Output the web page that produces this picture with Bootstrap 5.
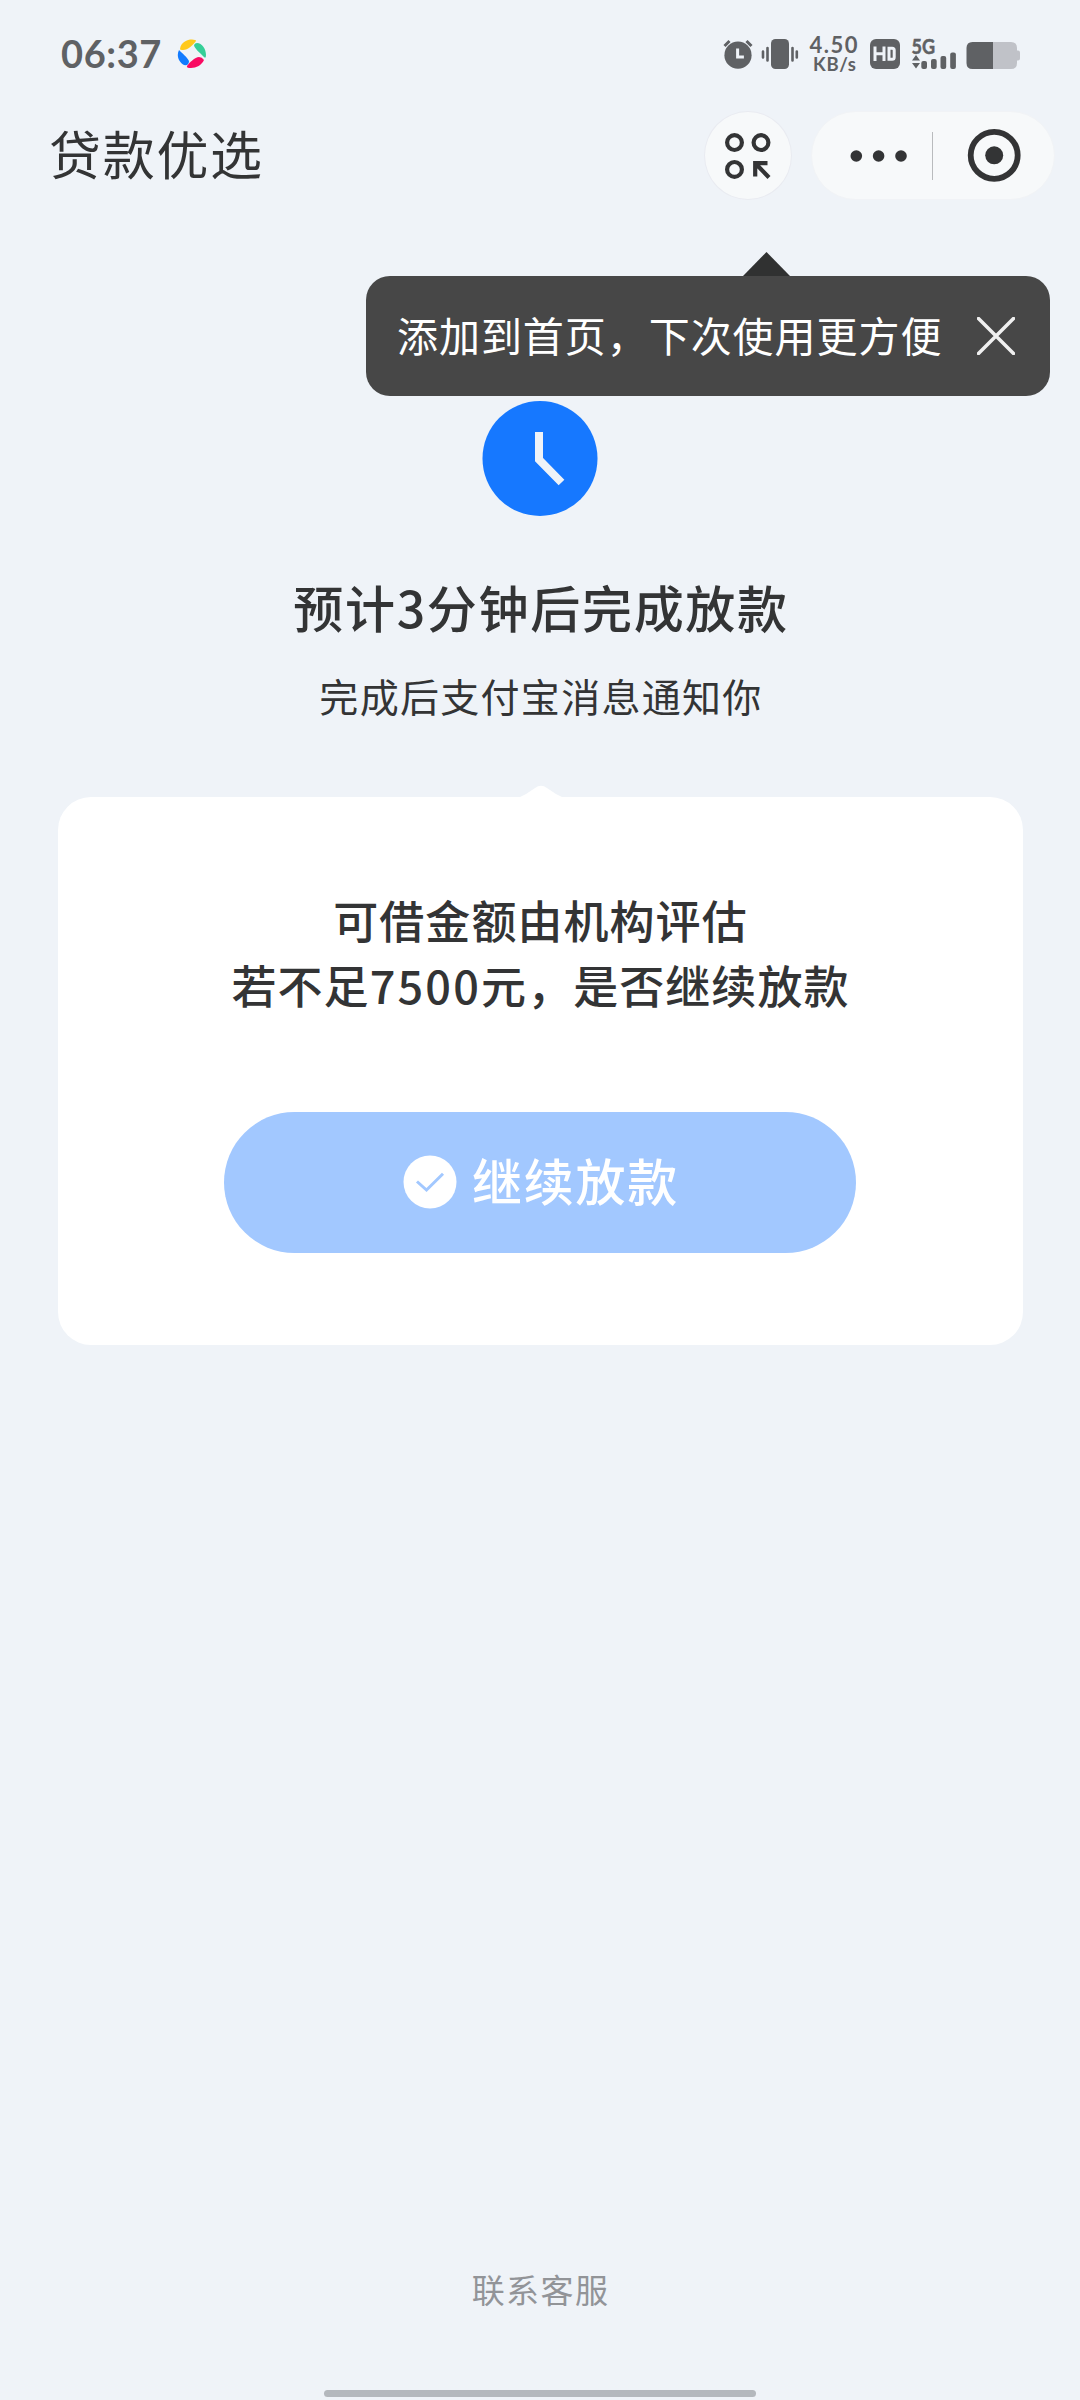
<!DOCTYPE html>
<html lang="zh-CN">
<head>
<meta charset="utf-8">
<meta name="viewport" content="width=device-width, initial-scale=1">
<title>贷款优选</title>
<link href="https://cdn.jsdelivr.net/npm/bootstrap@5.3.0/dist/css/bootstrap.min.css" rel="stylesheet">
<style>
body{background:#eff3f8;color:#333435;font-family:"Noto Sans CJK SC",sans-serif}
.screen{width:1080px;height:2400px;overflow:hidden}
.status{height:111px;padding:0 60px}
.status svg{display:block}
.clock-text{font:700 38px/56px Lato,sans-serif;color:#5f6164;letter-spacing:.6px;width:117px;padding:25px 0 0 1px}
.topbar{height:89px;padding:0 25px 0 49px}
.page-title{font-size:52px;line-height:84px;letter-spacing:1.7px;height:89px}
.round-btn{width:88px;height:89px;background:#f7f9fa;border:1px solid #e9ebf1;margin-right:19px}
.capsule{width:244px;height:89px;background:#f7f9fa;border:1px solid #f1f3f6}
.tip{left:366px;top:276px;width:684px;height:120px;background:#474747;border-radius:24px;padding:0 35px 0 31px;color:#fff;font-size:41px;letter-spacing:.95px}
.tip span{line-height:60px;padding-bottom:5px}
.tip-arrow{left:743px;top:252px}
.hero{padding-top:200px}
.hero h1{font-size:50px;font-weight:500;line-height:80px;letter-spacing:1.7px;margin:50px 0 0;padding-left:2px}
.hero .subline{font-size:39px;line-height:60px;letter-spacing:1.3px;margin:19px 0 0;padding-left:2px}
.loan{width:965px;height:548px;margin-top:72px;border:0;border-radius:33px;padding-top:90px}
.notch{left:458px;top:-12px}
.loan-copy{font-size:45px;font-weight:500;line-height:65.3px;letter-spacing:1.05px;margin:0;padding-left:1px}
.digits{letter-spacing:2.2px}
.go{width:632px;height:141px;margin-top:94px;background:#a2c8ff!important;border:0;color:#fff!important;opacity:1!important;font-size:50px;font-weight:500;letter-spacing:1.7px;padding:0 0 0 2px}
.go span{line-height:70px;padding-bottom:6px;margin-left:15px}
.service{font-size:33px;line-height:50px;letter-spacing:1.4px;color:#929498;height:126px;padding-left:1px}
.homebar{width:432px;height:7px;background:#b4b8bd;margin-bottom:3px}
</style>
</head>
<body>
<main class="screen position-relative d-flex flex-column">
  <header class="status d-flex align-items-start flex-shrink-0">
    <div class="clock-text">06:37</div>
    <svg class="mt-4" width="32" height="60" viewBox="177 24 32 60">
      <path d="M180 49C181 42 187 39.5 192 39.5Q196 39.5 196 41C193 45 187 51 182 50Q180 50 180 49Z" fill="#ffc91c"/>
      <path d="M197 43C202 43 206 49 206 55Q206 59 204 57C200 53 194 48 194 45Q195 43 197 43Z" fill="#35cf98"/>
      <path d="M204 60C202 65 196 68 191 68Q186 68 187 66C189 63 195 57 199 57Q202 57 204 60Z" fill="#f90a62"/>
      <path d="M179 50C176 56 179 62 184 65Q189 66 189 61C187 57 182 53 179 50Z" fill="#127bff"/>
    </svg>
    <svg class="ms-auto flex-shrink-0" width="300" height="90" viewBox="720 0 300 90" fill="#5f6164">
      <circle cx="738" cy="55.2" r="13.6"/>
      <path d="M724.5 46l5-5M751.5 46l-5-5" stroke="#5f6164" stroke-width="3"/>
      <path d="M737.6 48.500v8.500h6.300" fill="none" stroke="#eff3f8" stroke-width="3"/>
      <rect x="771" y="39" width="18" height="30" rx="4.500"/>
      <path d="M767.500 48v12.500M792.500 48v12.500M763 51.500v6M796.800 51.500v6" stroke="#5f6164" stroke-width="2.600" stroke-linecap="round"/>
      <g font-family="Lato,sans-serif" font-weight="700">
        <text x="809.500" y="52.500" font-size="22" textLength="48">4.50</text>
        <text x="813" y="70.500" font-size="18.500" textLength="43">KB/s</text>
        <text x="911.500" y="53.500" font-size="20.500" textLength="23.500" lengthAdjust="spacingAndGlyphs" stroke="#5f6164" stroke-width=".5">5G</text>
      </g>
      <rect x="870" y="39" width="30" height="30" rx="6"/>
      <path d="M875 46.500v14.500M884 46.500v14.500M875 53.700h9M889 48.200h3.200q2 0 2 2v7q0 2-2 2h-3.200z" fill="none" stroke="#eff3f8" stroke-width="3"/>
      <path d="M912 60.500l4-5.500 4 5.500zM912 63l4 5.500 4-5.500z"/>
      <rect x="921.300" y="61" width="5.700" height="8" rx="2"/><rect x="931" y="59" width="5.700" height="10" rx="2"/>
      <rect x="940.500" y="56" width="5.700" height="13" rx="2"/><rect x="950.200" y="52.500" width="5.700" height="16.500" rx="2"/>
      <path d="M993 42h18q6 0 6 6v2.500h1q2 0 2 2v6q0 2-2 2h-1v2.500q0 6-6 6h-18z" fill="#c0c2c8"/>
      <path d="M993 42h-20.500q-6 0-6 6v15q0 6 6 6H993z"/>
    </svg>
  </header>

  <nav class="topbar d-flex align-items-center flex-shrink-0">
    <div class="page-title me-auto">贷款优选</div>
    <div class="round-btn rounded-circle d-flex align-items-center justify-content-center">
      <svg width="48" height="48" viewBox="724 132 48 48" fill="none" stroke="#333435" stroke-width="4.200">
        <circle cx="734.500" cy="142.600" r="7.400"/><circle cx="761" cy="142.600" r="7.400"/><circle cx="734.500" cy="169.400" r="7.400"/>
        <path d="M767.500 163.200H755.200V176.500M755.500 163.500L769 177.500"/>
      </svg>
    </div>
    <div class="capsule rounded-pill d-flex align-items-center">
      <svg width="242" height="87" viewBox="812 112 242 87">
        <g fill="#333435"><circle cx="856.300" cy="156" r="5.800"/><circle cx="878.600" cy="156" r="5.800"/><circle cx="901" cy="156" r="5.800"/><circle cx="994.200" cy="155.300" r="9"/></g>
        <path d="M932.500 132v48" stroke="#b9bbbd"/>
        <circle cx="994.200" cy="155.300" r="23.500" fill="none" stroke="#333435" stroke-width="5.800"/>
      </svg>
    </div>
  </nav>

  <section class="hero text-center d-flex flex-column align-items-center">
    <svg width="116" height="116" viewBox="0 0 116 116"><circle cx="58" cy="58.500" r="57.500" fill="#1678ff"/><path d="M57 32V59.500L79.500 82.500" fill="none" stroke="#eff3f8" stroke-width="8"/></svg>
    <h1>预计3分钟后完成放款</h1>
    <p class="subline">完成后支付宝消息通知你</p>
    <div class="loan card position-relative align-items-center">
      <svg class="notch position-absolute" width="50" height="13" viewBox="0 0 50 13"><path d="M0 13Q5 12 10 9L19 3Q25-1.500 31 3L40 9Q45 12 50 13Z" fill="#fff"/></svg>
      <p class="loan-copy">可借金额由机构评估<br>若不足<span class="digits">7500</span>元，是否继续放款</p>
      <button class="go btn rounded-pill d-flex align-items-center justify-content-center" disabled>
        <svg width="54" height="54" viewBox="0 0 54 54"><circle cx="27" cy="27" r="26.500" fill="#fff"/><path d="M14 26.500L23.500 35L40 18.700" fill="none" stroke="#a2c8ff" stroke-width="3"/></svg>
        <span>继续放款</span>
      </button>
    </div>
  </section>

  <footer class="mt-auto d-flex flex-column align-items-center">
    <div class="service">联系客服</div>
    <div class="homebar rounded-pill"></div>
  </footer>

  <svg class="tip-arrow position-absolute" width="48" height="24" viewBox="0 0 48 24"><path d="M0 24L23.500 0L47 24Z" fill="#303131"/></svg>
  <div class="tip position-absolute d-flex align-items-center justify-content-between">
    <span>添加到首页，下次使用更方便</span>
    <svg width="38" height="38" viewBox="0 0 38 38"><path d="M1.500 1.500L36.500 36.500M36.500 1.500L1.500 36.500" stroke="#f0f0f0" stroke-width="3.500" stroke-linecap="round"/></svg>
  </div>
</main>
<script src="https://cdn.jsdelivr.net/npm/bootstrap@5.3.0/dist/js/bootstrap.bundle.min.js"></script>
</body>
</html>
